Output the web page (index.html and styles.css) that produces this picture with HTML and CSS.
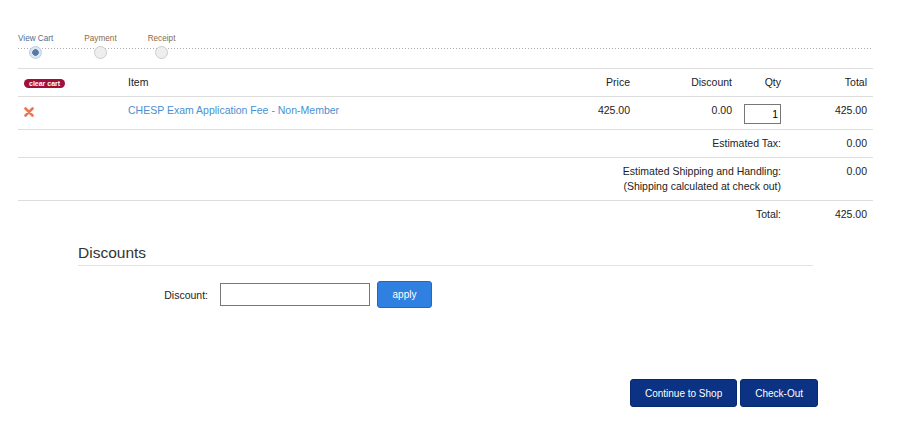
FILE: index.html
```html
<!DOCTYPE html>
<html lang="en">
<head>
	<meta charset="UTF-8">
	<title>Shopping Cart</title>
	<link rel="stylesheet" href="styles.css">
</head>
<body>
	<div class="page">
		<div class="steps">
			<div class="step active">View Cart<span class="dot"></span></div>
			<div class="step">Payment<span class="dot"></span></div>
			<div class="step">Receipt<span class="dot"></span></div>
		</div>

		<table class="cart">
			<tr>
				<th class="col-del"><span class="clear-cart">clear cart</span></th>
				<th class="col-item">Item</th>
				<th class="col-price num">Price</th>
				<th class="col-disc num">Discount</th>
				<th class="col-qty num">Qty</th>
				<th class="col-total num">Total</th>
			</tr>
			<tr>
				<td>
					<svg class="remove" width="10" height="10" viewBox="0 0 10 10">
						<path d="M1.5 1.5 L8.5 8.5 M8.5 1.5 L1.5 8.5" stroke="#ee7552" stroke-width="2.6" stroke-linecap="round"/>
					</svg>
				</td>
				<td><a href="#" class="item-link">CHESP Exam Application Fee - Non-Member</a></td>
				<td class="num">425.00</td>
				<td class="num">0.00</td>
				<td class="num"><input class="qty" type="text" value="1"></td>
				<td class="num">425.00</td>
			</tr>
			<tr>
				<td colspan="5" class="num">Estimated Tax:</td>
				<td class="num">0.00</td>
			</tr>
			<tr>
				<td colspan="5" class="num">Estimated Shipping and Handling:<br>(Shipping calculated at check out)</td>
				<td class="num">0.00</td>
			</tr>
			<tr>
				<td colspan="5" class="num">Total:</td>
				<td class="num">425.00</td>
			</tr>
		</table>

		<div class="discounts">
			<h2>Discounts</h2>
			<div class="discount-form">
				<label for="code">Discount:</label>
				<input id="code" class="code" type="text">
				<button class="apply">apply</button>
			</div>
		</div>

		<div class="actions">
			<button class="btn-dark">Continue to Shop</button>
			<button class="btn-dark">Check-Out</button>
		</div>
	</div>
</body>
</html>
```

FILE: styles.css
```css
body {
	margin: 0;
	background-color: #fff;
	color: #222;
	font-family: "Liberation Sans", Arial, sans-serif;
	font-size: 10.5px;
}

.page {
	width: 855px;
	padding: 33px 0 0 18px;
}

/* progress steps, dotted line drawn behind the dots */
.steps {
	display: flex;
	gap: 31px;
	height: 35px;
	font-size: 8.2px;
	line-height: 11px;
	color: #8a6a4a;
	background: linear-gradient(to right, #aaa 50%, transparent 0) 0 15px / 3px 1px repeat-x;
}

.step {
	display: flex;
	flex-direction: column;
	align-items: center;
}

.step.active {
	color: #4e6f93;
}

.dot {
	display: block;
	width: 11px;
	height: 11px;
	margin-top: 2px;
	margin-right: 1px;
	border: 1px solid #ccc;
	border-radius: 50%;
	background-color: #eee;
}

.step.active .dot {
	border-color: #b9cde3;
	background: radial-gradient(circle, #557aa3 0, #557aa3 3px, #dbe6f2 3.5px);
}

.cart {
	width: 855px;
	border-collapse: collapse;
	border-top: 1px solid #ddd;
}

.cart th,
.cart td {
	padding: 6px 6px;
	line-height: 15px;
	vertical-align: top;
	text-align: left;
	font-weight: normal;
	border-bottom: 1px solid #ddd;
}

.cart tr:last-child td {
	border-bottom: none;
}

.cart .num {
	text-align: right;
}

.col-del { width: 92px; }
.col-price { width: 84px; }
.col-disc { width: 90px; }
.col-qty { width: 37px; }
.col-total { width: 74px; }

.clear-cart {
	display: inline-block;
	margin-top: 4px;
	padding: 0 5px;
	background-color: #a0103a;
	color: #fff;
	font-size: 7px;
	font-weight: bold;
	line-height: 9px;
	border-radius: 5px;
	vertical-align: top;
}

.remove {
	display: block;
	margin-top: 4px;
}

.item-link {
	color: #4a8fd2;
	text-decoration: none;
}

.qty {
	box-sizing: border-box;
	width: 37px;
	height: 20px;
	margin: 1px 0 -1px;
	padding: 0 2px;
	border: 1px solid #777;
	text-align: right;
	font-family: "Liberation Sans", Arial, sans-serif;
	font-size: 10.5px;
}

.discounts {
	margin: 15px 60px 0;
}

.discounts h2 {
	margin: 0;
	padding-bottom: 2px;
	border-bottom: 1px solid #e2e2e2;
	font-size: 15.5px;
	font-weight: normal;
	line-height: 20px;
	color: #333;
}

.discount-form {
	display: flex;
	align-items: center;
	margin-top: 15px;
}

.discount-form label {
	width: 130px;
	text-align: right;
	margin-right: 12px;
}

.code {
	box-sizing: border-box;
	width: 150px;
	height: 23px;
	border: 1px solid #777;
}

.apply {
	margin-left: 7px;
	width: 55px;
	height: 27px;
	background-color: #2f80e1;
	color: #fff;
	border: 1px solid #2767b5;
	border-radius: 3px;
	font-family: "Liberation Sans", Arial, sans-serif;
	font-size: 10px;
}

.actions {
	display: flex;
	justify-content: flex-end;
	gap: 3px;
	margin: 71px 55px 0 0;
}

.btn-dark {
	height: 28px;
	padding: 0 14px;
	background-color: #0b3283;
	color: #fff;
	border: 1px solid #072a6e;
	border-radius: 3px;
	font-family: "Liberation Sans", Arial, sans-serif;
	font-size: 10px;
}
```
